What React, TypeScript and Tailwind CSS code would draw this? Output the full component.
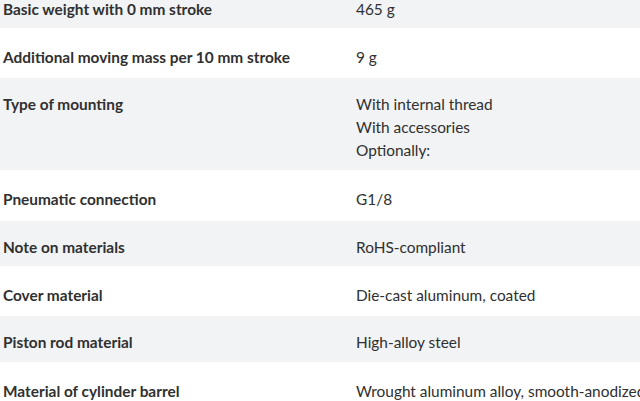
import React from "react";

type Row = {
  label: string;
  values: string[];
  shade: boolean;
  height: string;
};

const rows: Row[] = [
  { label: "Basic weight with 0 mm stroke", values: ["465 g"], shade: true, height: "h-[45px]" },
  { label: "Additional moving mass per 10 mm stroke", values: ["9 g"], shade: false, height: "h-[50px]" },
  {
    label: "Type of mounting",
    values: ["With internal thread", "With accessories", "Optionally:"],
    shade: true,
    height: "h-[92px]",
  },
  { label: "Pneumatic connection", values: ["G1/8"], shade: false, height: "h-[51px]" },
  { label: "Note on materials", values: ["RoHS-compliant"], shade: true, height: "h-[45px]" },
  { label: "Cover material", values: ["Die-cast aluminum, coated"], shade: false, height: "h-[50px]" },
  { label: "Piston rod material", values: ["High-alloy steel"], shade: true, height: "h-[46px]" },
  {
    label: "Material of cylinder barrel",
    values: ["Wrought aluminum alloy, smooth-anodized"],
    shade: false,
    height: "h-[50px]",
  },
];

export default function App() {
  return (
    <div className="h-[401px] w-[640px] overflow-hidden bg-white font-['Lato',sans-serif] text-[15.4px] leading-[23px] text-[#303030]">
      <div className="-mt-[17px]">
        {rows.map((row, idx) => (
          <div
            key={idx}
            className={
              row.shade
                ? `grid grid-cols-[353px_1fr] bg-[#f2f3f5] pt-[15px] pl-[3px] ${row.height}`
                : `grid grid-cols-[353px_1fr] bg-white pt-[18px] pl-[3px] ${row.height}`
            }
          >
            <div className="font-bold whitespace-nowrap">{row.label}</div>
            <div className="flex flex-col whitespace-nowrap">
              {row.values.map((v) => (
                <span key={v}>{v}</span>
              ))}
            </div>
          </div>
        ))}
      </div>
    </div>
  );
}
